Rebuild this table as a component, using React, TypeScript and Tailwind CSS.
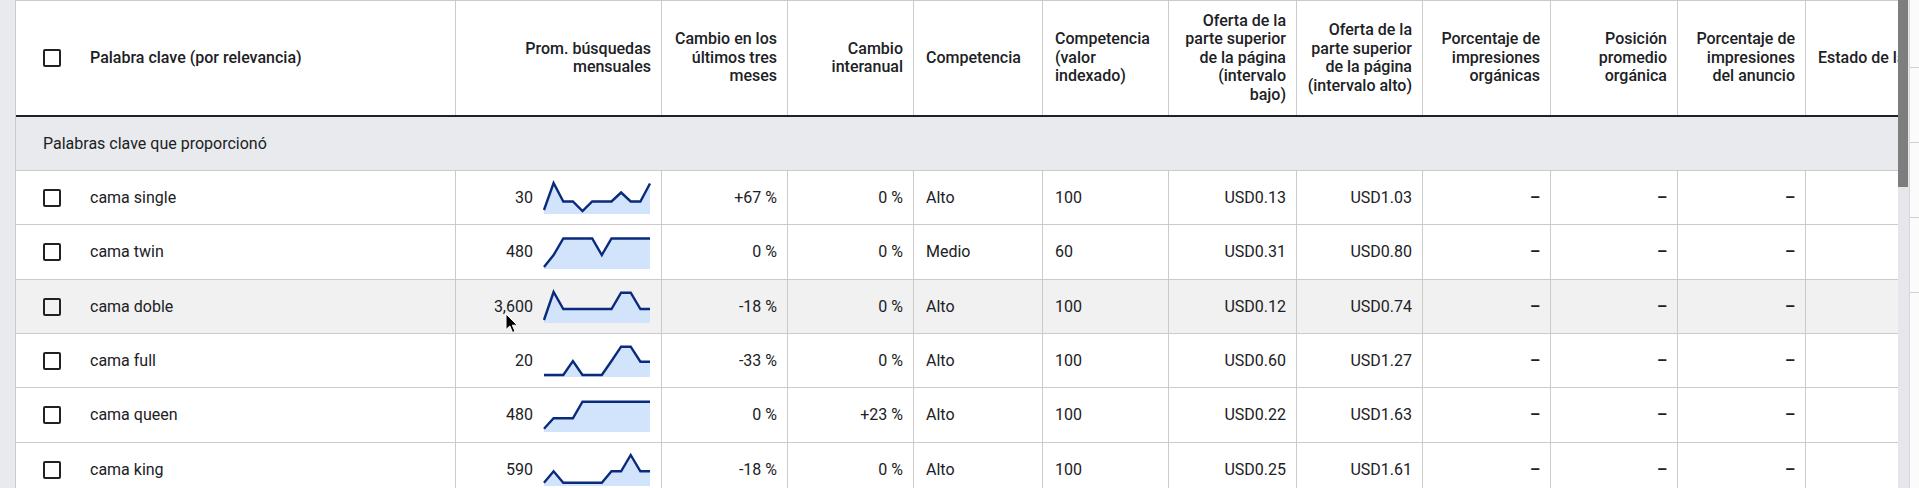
import React from "react";

type Row = {
  kw: string;
  avg: string;
  ys: number[];
  m3: string;
  yoy: string;
  comp: string;
  idx: string;
  low: string;
  high: string;
  h: string;
  hover?: boolean;
};

const ROWS: Row[] = [
  { kw: "cama single", avg: "30", ys: [29, 2, 20.5, 20.5, 30, 20.5, 20.5, 20.5, 11.5, 20.5, 20.5, 2.5], m3: "+67 %", yoy: "0 %", comp: "Alto", idx: "100", low: "USD0.13", high: "USD1.03", h: "h-[54px]" },
  { kw: "cama twin", avg: "480", ys: [31, 19, 2.5, 2.5, 2.5, 2.5, 19, 2.5, 2.5, 2.5, 2.5, 2.5], m3: "0 %", yoy: "0 %", comp: "Medio", idx: "60", low: "USD0.31", high: "USD0.80", h: "h-[55px]" },
  { kw: "cama doble", avg: "3,600", ys: [30, 2, 19, 19, 19, 19, 19, 19, 2.7, 2.7, 19, 19], m3: "-18 %", yoy: "0 %", comp: "Alto", idx: "100", low: "USD0.12", high: "USD0.74", h: "h-[54px]", hover: true },
  { kw: "cama full", avg: "20", ys: [31, 31, 31, 17, 31, 31, 31, 17, 2.7, 2.7, 17.7, 17.7], m3: "-33 %", yoy: "0 %", comp: "Alto", idx: "100", low: "USD0.60", high: "USD1.27", h: "h-[54px]" },
  { kw: "cama queen", avg: "480", ys: [29.7, 19.3, 19.3, 19.3, 2.7, 2.7, 2.7, 2.7, 2.7, 2.7, 2.7, 2.7], m3: "0 %", yoy: "+23 %", comp: "Alto", idx: "100", low: "USD0.22", high: "USD1.63", h: "h-[55px]" },
  { kw: "cama king", avg: "590", ys: [29.7, 18.3, 29.7, 29.7, 29.7, 29.7, 29.7, 18.3, 18.3, 2, 18.3, 18.3], m3: "-18 %", yoy: "0 %", comp: "Alto", idx: "100", low: "USD0.25", high: "USD1.61", h: "h-[54px]" },
];

const GRID =
  "grid grid-cols-[440px_206px_126px_126px_129px_126px_128px_126px_128px_127px_128px_260px]";

function Checkbox() {
  return <span className="block h-[18px] w-[18px] shrink-0 rounded-[2px] border-2 border-[#202124]" />;
}

function Spark({ ys }: { ys: number[] }) {
  const step = 106 / 11;
  const pts = ys.map((y, i) => `${(i * step).toFixed(1)},${y}`).join(" ");
  return (
    <svg width="106" height="33" viewBox="0 0 106 33" className="shrink-0 overflow-visible">
      <polygon points={`0,33 ${pts} 106,33`} fill="#d2e3fc" />
      <polyline points={pts} fill="none" stroke="#0a2a7c" strokeWidth="2.4" strokeLinejoin="miter" />
    </svg>
  );
}

const hCell = "flex items-center border-r border-[#cbcbcb] px-3";
const hRight = `${hCell} justify-end pr-[10px] text-right`;
const cell = "flex items-center border-r border-[#cbcbcb] px-3";
const right = `${cell} justify-end pr-[10px]`;

export default function App() {
  return (
    <div className="relative flex h-[488px] w-[1919px] overflow-hidden bg-white font-['Roboto','Liberation_Sans',sans-serif] text-[16px] text-[#202124]">
      {/* left gutter */}
      <div className="w-[15px] shrink-0 bg-[#e8eaed]" />

      {/* table */}
      <div className="w-[1883px] shrink-0 overflow-hidden border-l border-[#cbcbcb]">
        <div className={`${GRID} h-[115px] border-t border-[#cbcbcb] font-medium leading-[18.5px]`}>
          <div className={`${hCell} gap-[29px] pl-[27px]`}>
            <Checkbox />
            <span>Palabra clave (por relevancia)</span>
          </div>
          <div className={hRight}>Prom. búsquedas<br />mensuales</div>
          <div className={hRight}>Cambio en los<br />últimos tres<br />meses</div>
          <div className={hRight}>Cambio<br />interanual</div>
          <div className={hCell}>Competencia</div>
          <div className={hCell}>Competencia<br />(valor<br />indexado)</div>
          <div className={`${hRight} whitespace-nowrap`}>Oferta de la<br />parte superior<br />de la página<br />(intervalo<br />bajo)</div>
          <div className={`${hRight} whitespace-nowrap pl-0 pr-[9px]`}>Oferta de la<br />parte superior<br />de la página<br />(intervalo alto)</div>
          <div className={hRight}>Porcentaje de<br />impresiones<br />orgánicas</div>
          <div className={hRight}>Posición<br />promedio<br />orgánica</div>
          <div className={hRight}>Porcentaje de<br />impresiones<br />del anuncio</div>
          <div className={`${hCell} whitespace-nowrap`}>Estado de la palabra clave</div>
        </div>
        <div className="h-[2px] w-[2040px] bg-[#202124]" />

        <div className="flex h-[54px] w-[2040px] items-center border-b border-[#cbcbcb] bg-[#e8eaed] pl-[27px]">
          Palabras clave que proporcionó
        </div>

        {ROWS.map((r) => (
          <div
            key={r.kw}
            className={`${GRID} ${r.h} border-b border-[#cbcbcb] ${r.hover ? "bg-[#f1f1f1]" : "bg-white"}`}
          >
            <div className={`${cell} gap-[29px] pl-[27px]`}>
              <Checkbox />
              <span>{r.kw}</span>
            </div>
            <div className={`${cell} justify-end gap-[11px] pr-[11px]`}>
              <span>{r.avg}</span>
              <Spark ys={r.ys} />
            </div>
            <div className={right}>{r.m3}</div>
            <div className={right}>{r.yoy}</div>
            <div className={cell}>{r.comp}</div>
            <div className={cell}>{r.idx}</div>
            <div className={right}>{r.low}</div>
            <div className={right}>{r.high}</div>
            <div className={`${right} font-bold`}>–</div>
            <div className={`${right} font-bold`}>–</div>
            <div className={`${right} font-bold`}>–</div>
            <div className={cell} />
          </div>
        ))}
      </div>

      {/* scrollbar */}
      <div className="flex w-[11px] shrink-0 flex-col bg-[#e5e7ea]">
        <div className="h-[187px] w-[10px] bg-[#7e7e7e]" />
      </div>

      {/* panel behind */}
      <div className="flex w-[10px] shrink-0 flex-col border-l border-[#d6d6d6] bg-[#fbfbfb]">
        <div className="h-[68px] border-b border-[#cfcfcf]" />
        <div className="h-[75px] border-b border-[#cfcfcf]" />
        <div className="h-[75px] border-b border-[#cfcfcf]" />
        <div className="h-[75px] border-b border-[#cfcfcf]" />
      </div>

      {/* mouse pointer */}
      <svg className="absolute left-[505px] top-[313px]" width="14" height="21" viewBox="0 0 14 21">
        <path d="M1 1 L1 16.5 L4.8 13 L7.6 19.5 L10 18.4 L7.3 12.2 L12.2 12.2 Z" fill="#000" stroke="#fff" strokeWidth="1" />
      </svg>
    </div>
  );
}
